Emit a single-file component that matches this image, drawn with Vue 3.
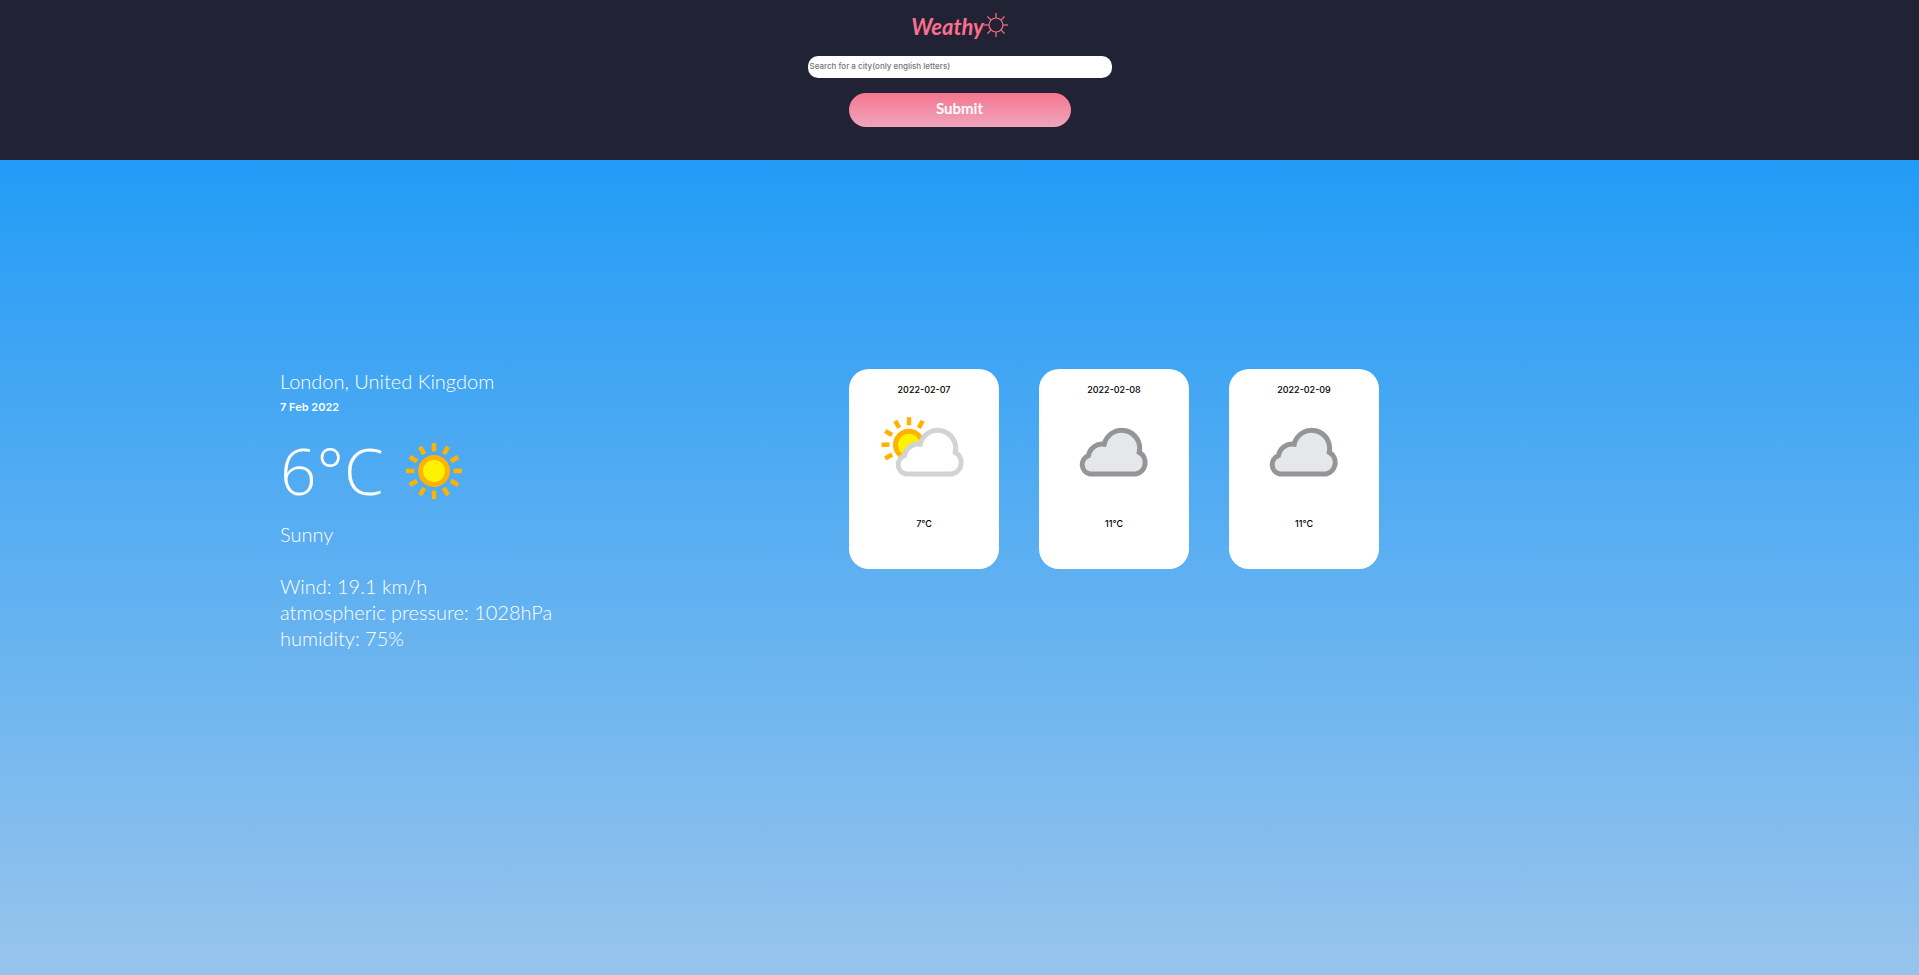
<script setup>
import { ref } from 'vue'

const city = ref('')

const rays = Array.from({ length: 12 }, (_, i) => i * 30)
const partlyRays = [180, 210, 240, 270, 300, 150]
const logoRays = Array.from({ length: 8 }, (_, i) => i * 45)

const forecast = [
  { date: '2022-02-07', temp: '7°C', icon: 'partly' },
  { date: '2022-02-08', temp: '11°C', icon: 'cloudy' },
  { date: '2022-02-09', temp: '11°C', icon: 'cloudy' },
]

const cloud =
  'M36 69H82A11.8 11.8 0 0 0 85.2 47.2A17.7 17.7 0 0 0 50.2 39.2A14 14 0 0 0 34.4 50.6A9.6 9.6 0 0 0 36 69Z'
</script>

<template>
  <div class="page">
    <header class="header">
      <h1 class="logo">
        <span>Weathy</span>
        <svg class="logo-sun" viewBox="0 0 24 24" aria-hidden="true">
          <circle cx="12" cy="12" r="7" />
          <path v-for="a in logoRays" :key="a" d="M19 12H24" :transform="`rotate(${a} 12 12)`" />
        </svg>
      </h1>
      <form class="search" @submit.prevent>
        <input
          v-model="city"
          class="field"
          type="text"
          aria-label="City"
          placeholder="Search for a city(only english letters)"
        />
        <button class="submit" type="submit">Submit</button>
      </form>
    </header>

    <main class="main">
      <section class="current">
        <p>London, United Kingdom</p>
        <p class="date">7 Feb 2022</p>
        <div class="now">
          <span class="temp">6°C</span>
          <svg class="sun" viewBox="0 0 64 64" aria-hidden="true">
            <circle class="disc" cx="32" cy="32" r="13.5" />
            <path
              v-for="a in rays"
              :key="a"
              class="ray"
              d="M51.5 32H60"
              :transform="`rotate(${a} 32 32)`"
            />
          </svg>
        </div>
        <p>Sunny</p>
        <div class="details">
          <p>Wind: 19.1 km/h</p>
          <p>atmospheric pressure: 1028hPa</p>
          <p>humidity: 75%</p>
        </div>
      </section>

      <section class="forecast">
        <article v-for="day in forecast" :key="day.date" class="card">
          <p>{{ day.date }}</p>
          <svg class="icon" viewBox="0 0 108 80" aria-hidden="true">
            <template v-if="day.icon === 'partly'">
              <circle class="disc" cx="39" cy="39.7" r="13.5" />
              <path
                v-for="a in partlyRays"
                :key="a"
                class="ray"
                d="M58.5 39.7H66.5"
                :transform="`rotate(${a} 39 39.7)`"
              />
              <path class="cloud light" :d="cloud" />
            </template>
            <path v-else class="cloud grey" :d="cloud" transform="translate(-6 0)" />
          </svg>
          <p>{{ day.temp }}</p>
        </article>
      </section>
    </main>
  </div>
</template>

<style>
body {
  margin: 0;
}
</style>

<style scoped>
.page {
  display: flex;
  flex-direction: column;
  min-height: 100vh;
  font-family: Lato, sans-serif;
}

p {
  margin: 0;
}

.header {
  box-sizing: border-box;
  height: 160px;
  padding-top: 8px;
  background: #212233;
}

.logo {
  display: flex;
  justify-content: center;
  height: 36px;
  margin: 0 0 12px;
  color: #fa6f8b;
  font-size: 22px;
  font-style: italic;
  font-weight: 700;
  line-height: 38px;
}

.logo-sun {
  width: 24px;
  height: 24px;
  margin-top: 5px;
  fill: none;
  stroke: currentColor;
  stroke-width: 1.2;
}

.search {
  display: flex;
  flex-direction: column;
  align-items: center;
  gap: 15px;
}

.field {
  box-sizing: border-box;
  width: 304px;
  height: 22px;
  padding: 0 2px 2px;
  border: 0;
  border-radius: 10px;
  background: #fff;
  font-family: Inter, sans-serif;
  font-size: 8px;
  font-weight: 500;
}

.field::placeholder {
  color: #757575;
}

.submit {
  width: 222px;
  height: 34px;
  padding: 0 0 4px;
  border: 0;
  border-radius: 17px;
  background: linear-gradient(#f5768f, #efa5bd);
  color: #fff;
  font-family: Lato, sans-serif;
  font-size: 15px;
  font-weight: 700;
}

.main {
  display: flex;
  flex: 1;
  align-items: flex-start;
  padding: 208px 280px 0;
  background: linear-gradient(#229bf6, #98c4ec);
}

.current {
  flex: 0 1 569px;
  color: #fff;
  font-size: 20px;
  font-weight: 300;
  line-height: 26px;
}

.date {
  font-family: Inter, sans-serif;
  font-size: 11px;
  font-weight: 600;
}

.now {
  display: flex;
  align-items: center;
  gap: 18px;
  height: 101px;
}

.temp {
  font-family: 'Open Sans', sans-serif;
  font-size: 64px;
  line-height: 80px;
}

.sun {
  width: 64px;
  height: 64px;
}

.details {
  margin-top: 26px;
}

.disc {
  fill: #fff200;
  stroke: #ffb300;
  stroke-width: 5;
}

.ray {
  fill: none;
  stroke: #ffb300;
  stroke-width: 4.5;
}

.cloud {
  stroke-width: 5;
}

.light {
  fill: #fff;
  stroke: #d1d3d4;
}

.grey {
  fill: #e6e7e8;
  stroke: #939598;
}

.forecast {
  display: flex;
  gap: 40px;
  margin-top: 1px;
}

.card {
  display: flex;
  flex-direction: column;
  align-items: center;
  box-sizing: border-box;
  width: 150px;
  min-height: 200px;
  padding-top: 14px;
  border-radius: 20px;
  background: #fff;
  color: #000;
  font-family: Inter, sans-serif;
  font-size: 9px;
  font-weight: 500;
  line-height: 14px;
}

.icon {
  width: 108px;
  height: 80px;
  margin: 8px 0 32px;
}
</style>
